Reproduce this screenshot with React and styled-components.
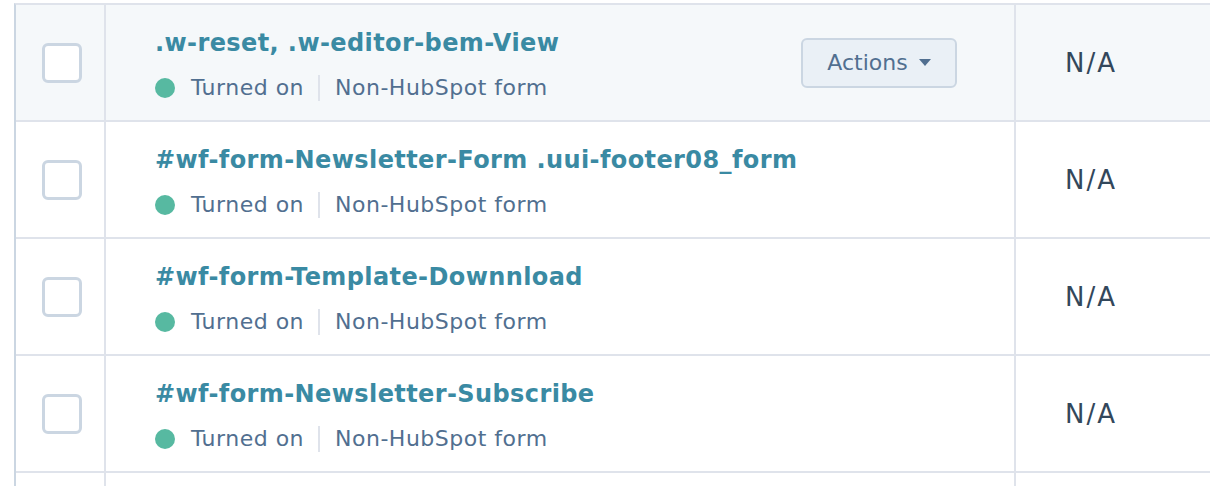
import React from "react";
import styled, { createGlobalStyle } from "styled-components";

const GlobalStyle = createGlobalStyle`
  body {
    margin: 0;
    background: #ffffff;
    font-family: "DejaVu Sans", "Open Sans", sans-serif;
  }
`;

const rows = [
  { name: ".w-reset, .w-editor-bem-View", hovered: true },
  { name: "#wf-form-Newsletter-Form .uui-footer08_form" },
  { name: "#wf-form-Template-Downnload" },
  { name: "#wf-form-Newsletter-Subscribe" },
  { name: "", empty: true },
];

const App = () => {
  return (
    <>
      <GlobalStyle />
      <Page>
        <Table>
          {rows.map((row, i) => (
            <Row key={i} $hovered={row.hovered}>
              <CheckCell>{!row.empty && <Checkbox />}</CheckCell>
              <NameCell>
                {!row.empty && (
                  <>
                    <TextBlock>
                      <Title>{row.name}</Title>
                      <Meta>
                        <Dot />
                        <span>Turned on</span>
                        <Divider />
                        <span>Non-HubSpot form</span>
                      </Meta>
                    </TextBlock>
                    {row.hovered && (
                      <ActionsButton>
                        Actions
                        <Caret />
                      </ActionsButton>
                    )}
                  </>
                )}
              </NameCell>
              <ValueCell>{!row.empty && "N/A"}</ValueCell>
            </Row>
          ))}
        </Table>
      </Page>
    </>
  );
};
export default App;

const Page = styled.div`
  width: 1210px;
  height: 486px;
  overflow: hidden;
  padding: 3px 0 0 14px;
  box-sizing: border-box;
`;

const Table = styled.div`
  border-top: 2px solid #dfe3eb;
  border-left: 2px solid #cbd6e2;
  width: 1300px;
`;

const Row = styled.div`
  display: grid;
  grid-template-columns: 90px 910px 1fr;
  height: 115px;
  border-bottom: 2px solid #dfe3eb;
  background: ${(p) => (p.$hovered ? "#f5f8fa" : "#ffffff")};
`;

const CheckCell = styled.div`
  display: flex;
  align-items: center;
  padding-left: 26px;
  border-right: 2px solid #dfe3eb;
`;

const Checkbox = styled.div`
  width: 34px;
  height: 34px;
  border: 3px solid #cbd6e2;
  border-radius: 6px;
  background: #ffffff;
`;

const NameCell = styled.div`
  display: flex;
  align-items: center;
  justify-content: space-between;
  padding: 0 57px 0 49px;
  border-right: 2px solid #dfe3eb;
`;

const TextBlock = styled.div`
  padding-top: 4px;
`;

const Title = styled.div`
  font-size: 24px;
  font-weight: 700;
  color: #3a8aa3;
  line-height: 30px;
  letter-spacing: 0.4px;
`;

const Meta = styled.div`
  display: flex;
  align-items: center;
  margin-top: 17px;
  font-size: 22px;
  letter-spacing: 0.5px;
  color: #516f90;
  line-height: 26px;
`;

const Dot = styled.span`
  width: 20px;
  height: 20px;
  border-radius: 50%;
  background: #57b9a1;
  margin-right: 16px;
`;

const Divider = styled.span`
  width: 2px;
  height: 26px;
  background: #dfe3eb;
  margin: 0 15px 0 14px;
`;

const ActionsButton = styled.button`
  display: flex;
  align-items: center;
  justify-content: center;
  gap: 11px;
  width: 156px;
  height: 50px;
  background: #eaf0f6;
  border: 2px solid #cbd6e2;
  border-radius: 6px;
  font-family: inherit;
  font-size: 22px;
  color: #516f90;
  padding: 0;
`;

const Caret = styled.span`
  width: 0;
  height: 0;
  border-left: 6px solid transparent;
  border-right: 6px solid transparent;
  border-top: 7px solid #516f90;
`;

const ValueCell = styled.div`
  display: flex;
  align-items: center;
  padding-left: 49px;
  font-size: 26px;
  letter-spacing: 2px;
  color: #33475b;
`;
